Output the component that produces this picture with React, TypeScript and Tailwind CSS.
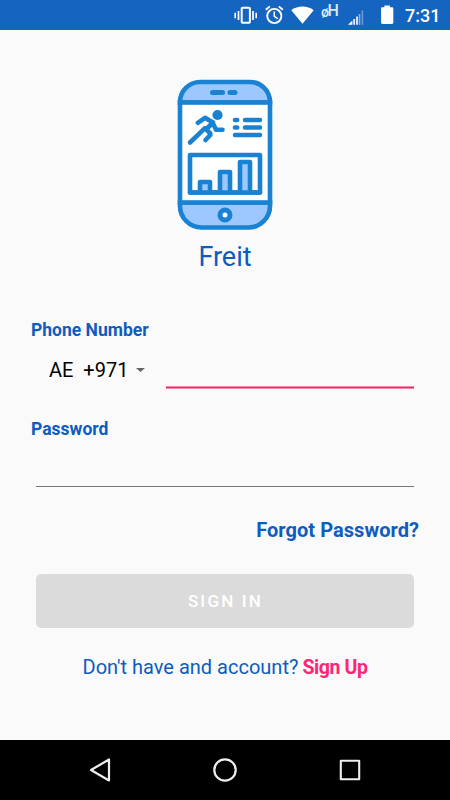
import { useState } from "react";

function StatusBar() {
  return (
    <header className="relative h-[30px] shrink-0 bg-[#1565c0] text-white">
      <svg className="block h-[30px] w-[450px]" viewBox="0 0 450 30" fill="none">
        {/* vibrate */}
        <rect x="241.7" y="7.7" width="8.2" height="15" rx="0.8" stroke="#fff" strokeWidth="2" />
        <path d="M238.5 11v9M253 11v9" stroke="#fff" strokeWidth="1.7" />
        <path d="M235.2 12.8v5.4M256.2 12.8v5.4" stroke="#fff" strokeWidth="1.6" />
        {/* alarm */}
        <circle cx="274.3" cy="16" r="7.1" stroke="#fff" strokeWidth="1.9" />
        <path d="M274.3 11.6v4.8l3.4 2.2" stroke="#fff" strokeWidth="1.5" />
        <path d="M265.8 9.8l4-3.4M282.8 9.8l-4-3.4" stroke="#fff" strokeWidth="1.9" />
        {/* wifi */}
        <path d="M291.3 10.2C297.6 5.4 307.4 5.4 313.7 10.2L302.5 23.8Z" fill="#fff" />
        {/* signal */}
        <path d="M348 24.8L352.4 20.6v4.2Z" fill="#fff" />
        <path d="M354.2 19v5.8M357 16.4v8.4" stroke="#fff" strokeOpacity="0.95" strokeWidth="1.7" />
        <path d="M359.5 14v10.8" stroke="#fff" strokeOpacity="0.5" strokeWidth="1.6" />
        <path d="M362.4 10.5v14.3" stroke="#fff" strokeOpacity="0.35" strokeWidth="1.6" />
        {/* battery */}
        <path d="M384.4 7.3V5.4h5.5v1.9h2.1c.8 0 1.3.5 1.3 1.3v14c0 .8-.5 1.3-1.3 1.3h-9.6c-.8 0-1.3-.5-1.3-1.3v-14c0-.8.5-1.3 1.3-1.3Z" fill="#fff" />
      </svg>
      <span className="absolute left-[321px] top-[4px] text-[14px] font-medium leading-[16px] opacity-85">ø</span>
      <span className="absolute left-[327.5px] top-[3px] text-[16px] font-medium leading-[16px] opacity-85">H</span>
      <span className="absolute left-[405px] top-[5px] text-[18px] font-medium leading-[21px]">7:31</span>
    </header>
  );
}

function Logo() {
  return (
    <svg className="h-[152px] w-[96px]" viewBox="177 79 96 152" fill="none" stroke="#1a82d2" strokeWidth="4.6">
      <path d="M180 102.5V102a20 20 0 0 1 20-20h50a20 20 0 0 1 20 20v.5Z" fill="#9dc8ff" />
      <path d="M180 202.5V206a21.5 21.5 0 0 0 21.5 21.5h47a21.5 21.5 0 0 0 21.5-21.5v-3.5Z" fill="#9dc8ff" />
      <rect x="180" y="102.5" width="90" height="100" fill="#fff" />
      <path d="M212.5 92.5h10M230 92.5h5" strokeWidth="5" strokeLinecap="round" />
      <circle cx="225" cy="215" r="5" fill="#fff" strokeWidth="5" />
      <circle cx="217.5" cy="115" r="5.1" fill="#1a82d2" stroke="none" />
      {/* runner */}
      <g strokeLinecap="round" strokeLinejoin="round">
        <path d="M197.8 122.8l7.2-5 8 4.7-5 5" />
        <path d="M212.5 122.5l3.5 7.2h6.5" />
        <path d="M190 142.5l15-14.3 5.3 5.3v1.5l-4.8 5" />
      </g>
      <path d="M235 120h2.2M245 120h15M235 127.5h2.2M245 127.5h15M235 135h25" strokeLinecap="round" />
      <rect x="190" y="155" width="70" height="37.5" fill="#fff" strokeLinejoin="round" />
      <path d="M200 192v-10h10v10M220 192v-20h10v20M240 192v-30h10v30" fill="#9dc8ff" strokeLinejoin="round" />
      <path d="M190 192.5h70" strokeLinecap="round" />
    </svg>
  );
}

function NavBar() {
  return (
    <nav className="flex h-[60px] shrink-0 items-center justify-between bg-black px-[88px]">
      <button aria-label="Back">
        <svg className="h-6 w-6" viewBox="0 0 24 24" fill="none" stroke="#eee" strokeWidth="2.2" strokeLinejoin="round">
          <path d="M21 1.5v21L3 12Z" />
        </svg>
      </button>
      <button aria-label="Home">
        <svg className="h-6 w-6" viewBox="0 0 24 24" fill="none" stroke="#eee" strokeWidth="2.2">
          <circle cx="12" cy="12" r="10.7" />
        </svg>
      </button>
      <button aria-label="Recent apps">
        <svg className="h-6 w-6" viewBox="0 0 24 24" fill="none" stroke="#eee" strokeWidth="2.1" strokeLinejoin="round">
          <rect x="2.8" y="2.8" width="18.4" height="18.4" />
        </svg>
      </button>
    </nav>
  );
}

export default function App() {
  const [phone, setPhone] = useState("");
  const [password, setPassword] = useState("");

  return (
    <div className="flex h-[800px] w-[450px] flex-col bg-[#fafafa] font-[Roboto,sans-serif] text-[#0d5cc0]">
      <StatusBar />

      <main className="flex flex-1 flex-col">
        <div className="flex flex-col items-center pt-[49px]">
          <Logo />
          <h1 className="mt-2.5 text-[27px] leading-8">Freit</h1>
        </div>

        <label htmlFor="phone" className="ml-[31px] mt-[47px] text-[17.5px] font-bold leading-5">
          Phone Number
        </label>
        <div className="ml-[49px] mr-9 mt-2 flex h-[41px] items-start">
          <button className="flex w-[117px] items-center pt-2 text-[20px] leading-7 text-black">
            <span className="whitespace-pre">AE  +971</span>
            <svg className="ml-2 h-1 w-[9px]" viewBox="0 0 9 4">
              <path d="M0 0h9L4.5 4Z" fill="#666" />
            </svg>
          </button>
          <div className="flex flex-1 flex-col">
            <input
              id="phone"
              value={phone}
              onChange={(e) => setPhone(e.target.value)}
              className="h-[38px] w-full bg-transparent outline-none"
            />
            <div className="h-[3px] border-y border-[#fc85a8] bg-[#f0246b]" />
          </div>
        </div>

        <label htmlFor="password" className="ml-[31px] mt-[30px] text-[17.5px] font-bold leading-5">
          Password
        </label>
        <input
          id="password"
          type="password"
          value={password}
          onChange={(e) => setPassword(e.target.value)}
          className="mx-9 mt-1.5 h-[42px] border-b border-[#777] bg-transparent outline-none"
        />

        <button className="mr-[31px] mt-[31px] self-end text-[20px] font-bold leading-6 tracking-[0.05px]">
          Forgot Password?
        </button>

        <button
          disabled
          className="mx-9 mt-8 h-[54px] rounded-[5px] bg-[#dbdbdb] pl-px pt-0.5 text-[17px] font-medium tracking-[2.2px] text-white"
        >
          SIGN IN
        </button>

        <p className="mt-[27px] flex items-baseline justify-center gap-1 text-[20px] leading-6">
          <span>Don't have and account?</span>
          <a className="text-[19.5px] font-bold tracking-[-0.4px] text-[#ff2476]">Sign Up</a>
        </p>
      </main>

      <NavBar />
    </div>
  );
}
